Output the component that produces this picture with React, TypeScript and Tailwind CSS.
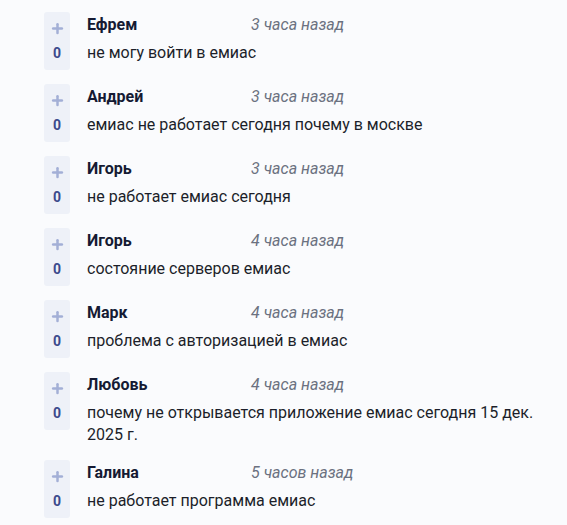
import { Plus } from 'lucide-react';

interface Comment {
    name: string;
    time: string;
    text: string;
}

const comments: Comment[] = [
    { name: 'Ефрем', time: '3 часа назад', text: 'не могу войти в емиас' },
    { name: 'Андрей', time: '3 часа назад', text: 'емиас не работает сегодня почему в москве' },
    { name: 'Игорь', time: '3 часа назад', text: 'не работает емиас сегодня' },
    { name: 'Игорь', time: '4 часа назад', text: 'состояние серверов емиас' },
    { name: 'Марк', time: '4 часа назад', text: 'проблема с авторизацией в емиас' },
    { name: 'Любовь', time: '4 часа назад', text: 'почему не открывается приложение емиас сегодня 15 дек. 2025 г.' },
    { name: 'Галина', time: '5 часов назад', text: 'не работает программа емиас' },
];

export default function App() {
    return (
        <div className="min-h-[525px] bg-[#fafbfd] pl-[44px] pr-[20px] pt-[12px]" style={{ fontFamily: 'Roboto, "Noto Sans", sans-serif' }}>
            <div className="flex flex-col gap-[14px]">
                {comments.map((c, i) => (
                    <div key={i} className="flex items-start">
                        <div className="w-[26px] h-[58px] shrink-0 rounded-[3px] bg-[#eef1f8] flex flex-col items-center pt-[9px]">
                            <Plus className="w-[15px] h-[15px] text-[#a3afd6]" strokeWidth={4} />
                            <span className="mt-[9px] text-[14px] font-bold leading-[16px] text-[#3b4a8c]">0</span>
                        </div>
                        <div className="ml-[17px] flex-1 min-w-0 pt-[1px]">
                            <div className="flex items-center h-[24px]">
                                <span className="w-[164px] shrink-0 text-[16px] font-bold text-[#151a33]">{c.name}</span>
                                <span className="text-[16px] italic text-[#6b7180]">{c.time}</span>
                            </div>
                            <p className="mt-[5px] text-[16px] leading-[22px] text-[#1c1f2a]">{c.text}</p>
                        </div>
                    </div>
                ))}
            </div>
        </div>
    );
}
